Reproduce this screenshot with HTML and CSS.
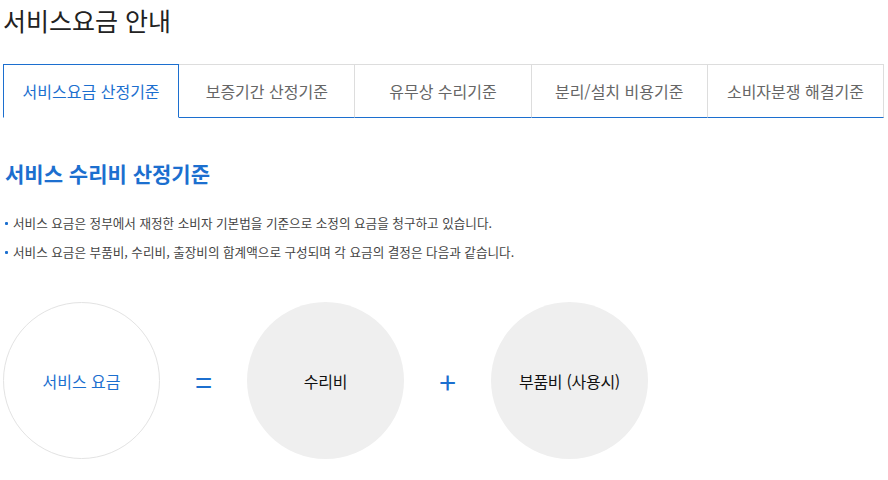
FILE: index.html
```html
<!DOCTYPE html>
<html lang="ko">
<head>
    <meta charset="UTF-8">
    <title>서비스요금 안내</title>
    <link rel="stylesheet" href="styles.css">
</head>
<body>
    <div class="page">
        <h1 class="page-title">서비스요금 안내</h1>

        <ul class="tabs">
            <li class="tab active">서비스요금 산정기준</li>
            <li class="tab">보증기간 산정기준</li>
            <li class="tab">유무상 수리기준</li>
            <li class="tab">분리/설치 비용기준</li>
            <li class="tab">소비자분쟁 해결기준</li>
        </ul>

        <h2 class="section-title">서비스 수리비 산정기준</h2>
        <ul class="notes">
            <li>서비스 요금은 정부에서 재정한 소비자 기본법을 기준으로 소정의 요금을 청구하고 있습니다.</li>
            <li>서비스 요금은 부품비, 수리비, 출장비의 합계액으로 구성되며 각 요금의 결정은 다음과 같습니다.</li>
        </ul>

        <div class="formula">
            <div class="circle total">서비스 요금</div>
            <div class="op">=</div>
            <div class="circle">수리비</div>
            <div class="op">+</div>
            <div class="circle">부품비 (사용시)</div>
        </div>
    </div>
</body>
</html>
```

FILE: styles.css
```css
body {
    margin: 0;
    background-color: #fff;
    font-family: "Noto Sans CJK KR", "Noto Sans", sans-serif;
    color: #333;
}
.page {
    padding: 0 4px 0 3px;
}
.page-title {
    margin: 0;
    padding-top: 2px;
    font-size: 25px;
    font-weight: 400;
    line-height: 36px;
    color: #222;
}
.tabs {
    display: grid;
    grid-template-columns: repeat(5, 1fr);
    margin: 26px 0 0;
    padding: 0;
    list-style: none;
}
.tab {
    height: 52px;
    line-height: 52px;
    text-align: center;
    font-size: 16px;
    color: #666;
    border-top: 1px solid #ddd;
    border-right: 1px solid #ddd;
    border-bottom: 1px solid #1c6fcf;
}
.tab.active {
    color: #1c6fcf;
    border: 1px solid #1c6fcf;
    border-bottom-color: #fff;
}
.section-title {
    margin: 40px 0 0 2px;
    font-size: 21px;
    font-weight: 700;
    line-height: 30px;
    color: #1c6fcf;
}
.notes {
    margin: 26px 0 0;
    padding: 0 0 0 2px;
    list-style: none;
}
.notes li {
    position: relative;
    padding-left: 8px;
    font-size: 12.6px;
    line-height: 17px;
    color: #444;
    margin-bottom: 12px;
}
.notes li::before {
    content: "";
    position: absolute;
    left: 0;
    top: 8px;
    width: 3px;
    height: 3px;
    border-radius: 1px;
    background-color: #1c6fcf;
}
.formula {
    display: flex;
    align-items: center;
    margin-top: 42px;
}
.circle {
    width: 157px;
    height: 157px;
    border-radius: 50%;
    background-color: #efefef;
    display: flex;
    align-items: center;
    justify-content: center;
    font-size: 16px;
    font-weight: 400;
    letter-spacing: -0.3px;
    color: #111;
    box-sizing: border-box;
}
.circle.total {
    background-color: #fff;
    border: 1px solid #e3e3e3;
    color: #1c6fcf;
    letter-spacing: 0;
}
.op {
    width: 87px;
    text-align: center;
    font-size: 30px;
    font-weight: 400;
    color: #1c6fcf;
}
```
